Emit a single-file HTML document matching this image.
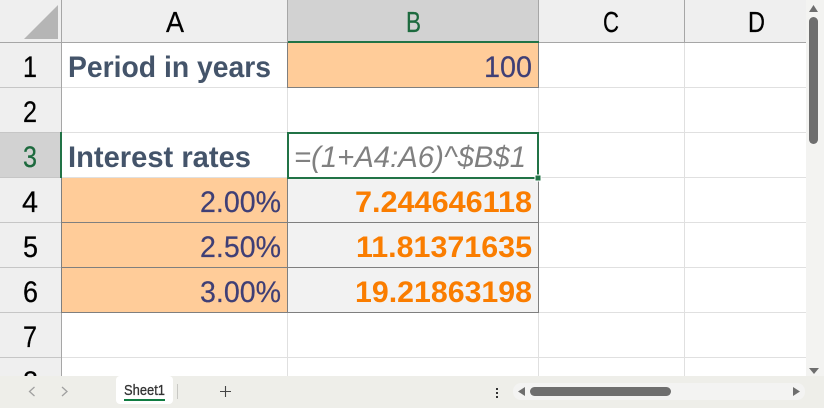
<!DOCTYPE html>
<html><head><meta charset="utf-8"><style>
html,body{margin:0;padding:0;background:#fff;width:824px;height:408px;overflow:hidden}
svg{display:block;font-family:"Liberation Sans",sans-serif}
</style></head><body>
<svg width="824" height="408" viewBox="0 0 824 408" xmlns="http://www.w3.org/2000/svg">
<rect width="824" height="408" fill="#fff"/>
<!-- headers -->
<rect x="0" y="0" width="806" height="42" fill="#efefef"/>
<rect x="0" y="42" width="61" height="334" fill="#efefef"/>
<rect x="288" y="0" width="250" height="42" fill="#d2d2d2"/>
<rect x="0" y="132" width="61" height="46" fill="#d2d2d2"/>
<polygon points="24,39 58,5 58,39" fill="#b5b5b5"/>
<!-- fills -->
<rect x="288" y="43" width="250" height="44" fill="#ffcc99"/>
<rect x="62" y="178" width="225" height="134" fill="#ffcc99"/>
<rect x="288" y="178" width="250" height="134" fill="#f2f2f2"/>
<!-- grid lines -->
<g stroke="#e0e0e0" stroke-width="1" shape-rendering="crispEdges">
<path d="M62 87.5H806M62 132.5H806M62 177.5H806M538 222.5H806M538 267.5H806M62 312.5H806M62 357.5H806"/>
<path d="M287.5 43V376M538.5 43V376M684.5 43V376"/>
</g>
<g stroke="#c6c6c6" stroke-width="1" shape-rendering="crispEdges">
<path d="M0 87.5H61M0 132.5H61M0 177.5H61M0 222.5H61M0 267.5H61M0 312.5H61M0 357.5H61"/>
</g>
<g stroke="#a6a6a6" stroke-width="1" shape-rendering="crispEdges">
<path d="M0 42.5H806M61.5 0V376M287.5 0V42M538.5 0V42M684.5 0V42"/>
</g>
<!-- cell borders -->
<g stroke="#7f7f7f" stroke-width="1" fill="none" shape-rendering="crispEdges">
<path d="M287.5 42V87.5H538.5V42"/>
<path d="M61.5 178V312.5H538.5V178"/>
<path d="M287.5 178V312.5"/>
<path d="M61.5 222.5H538.5M61.5 267.5H538.5"/>
</g>
<!-- selection -->
<g fill="#217346" shape-rendering="crispEdges">
<rect x="288" y="41" width="251" height="2"/>
<rect x="60" y="132" width="2" height="46"/>
<rect x="287" y="132" width="2" height="47"/>
<rect x="537" y="132" width="2" height="47"/>
<rect x="287" y="132" width="252" height="2"/>
<rect x="287" y="177" width="252" height="2"/>
<rect x="535" y="175" width="6" height="6" stroke="#fff" stroke-width="1"/>
</g>
<!-- column letters -->
<g font-size="29" fill="#000" stroke="#000" stroke-width="0.25">
<text x="166" y="32" textLength="18" lengthAdjust="spacingAndGlyphs">A</text>
<text x="406" y="32" textLength="15" lengthAdjust="spacingAndGlyphs" fill="#1d6a3e" stroke="#1d6a3e">B</text>
<text x="603" y="32" textLength="16" lengthAdjust="spacingAndGlyphs">C</text>
<text x="748" y="32" textLength="17" lengthAdjust="spacingAndGlyphs">D</text>
</g>
<!-- row numbers -->
<g font-size="30" fill="#000" stroke="#000" stroke-width="0.25">
<text x="23" y="77" textLength="14" lengthAdjust="spacingAndGlyphs">1</text>
<text x="23" y="122" textLength="14" lengthAdjust="spacingAndGlyphs">2</text>
<text x="23" y="167" textLength="14" lengthAdjust="spacingAndGlyphs" fill="#1d6a3e" stroke="#1d6a3e">3</text>
<text x="22" y="212" textLength="16" lengthAdjust="spacingAndGlyphs">4</text>
<text x="23" y="257" textLength="15" lengthAdjust="spacingAndGlyphs">5</text>
<text x="23" y="302" textLength="15" lengthAdjust="spacingAndGlyphs">6</text>
<text x="23" y="347" textLength="14" lengthAdjust="spacingAndGlyphs">7</text>
<text x="23" y="392" textLength="15" lengthAdjust="spacingAndGlyphs">8</text>
</g>
<!-- cells -->
<g font-size="30" font-weight="700" fill="#44546a">
<text x="68" y="77" textLength="203" lengthAdjust="spacingAndGlyphs">Period in years</text>
<text x="68" y="167" textLength="183" lengthAdjust="spacingAndGlyphs">Interest rates</text>
</g>
<g font-size="30" fill="#3f3f76" stroke="#3f3f76" stroke-width="0.2">
<text x="484" y="77" textLength="48" lengthAdjust="spacingAndGlyphs">100</text>
<text x="200" y="212" textLength="81" lengthAdjust="spacingAndGlyphs">2.00%</text>
<text x="200" y="257" textLength="81" lengthAdjust="spacingAndGlyphs">2.50%</text>
<text x="200" y="302" textLength="81" lengthAdjust="spacingAndGlyphs">3.00%</text>
</g>
<text x="294" y="167" font-size="30" font-style="italic" fill="#808080" textLength="232" lengthAdjust="spacingAndGlyphs">=(1+A4:A6)^$B$1</text>
<g font-size="30" font-weight="700" fill="#fa7d00">
<text x="355" y="212" textLength="177" lengthAdjust="spacingAndGlyphs">7.244646118</text>
<text x="356" y="257" textLength="176" lengthAdjust="spacingAndGlyphs">11.81371635</text>
<text x="355" y="302" textLength="177" lengthAdjust="spacingAndGlyphs">19.21863198</text>
</g>
<!-- vertical scrollbar -->
<rect x="806" y="0" width="18" height="376" fill="#f3f3f1"/>
<polygon points="813.5,5 818,12 809,12" fill="#6e6e6e"/>
<rect x="809" y="17" width="9" height="127" rx="4.5" fill="#6e6e6e"/>
<polygon points="809,368 819,368 814,374" fill="#6e6e6e"/>
<!-- bottom bar -->
<rect x="0" y="376" width="824" height="32" fill="#eeeee9"/>
<rect x="116" y="376" width="57" height="28" rx="4" fill="#fff"/>
<text x="124" y="395" font-size="15" fill="#333" stroke="#333" stroke-width="0.3" textLength="41" lengthAdjust="spacingAndGlyphs">Sheet1</text>
<rect x="124" y="399" width="41" height="2" fill="#107c41"/>
<rect x="177" y="384" width="1" height="15" fill="#c8c8c4"/>
<path d="M34.5 387L29.5 391.5L34.5 396" fill="none" stroke="#a0a0a0" stroke-width="1.3"/>
<path d="M62 387L67 391.5L62 396" fill="none" stroke="#a0a0a0" stroke-width="1.3"/>
<path d="M220 391.5H231M225.5 386V397" fill="none" stroke="#444" stroke-width="1.1"/>
<g fill="#333">
<rect x="496" y="388" width="2" height="2"/>
<rect x="496" y="392" width="2" height="2"/>
<rect x="496" y="396" width="2" height="2"/>
</g>
<rect x="513" y="383" width="292" height="17" rx="8" fill="#f3f3f2"/>
<polygon points="518,391.5 525,387 525,396" fill="#6e6e6e"/>
<rect x="530" y="387" width="141" height="9" rx="4.5" fill="#6e6e6e"/>
<polygon points="800,391.5 793,387 793,396" fill="#6e6e6e"/>
</svg>
</body></html>
